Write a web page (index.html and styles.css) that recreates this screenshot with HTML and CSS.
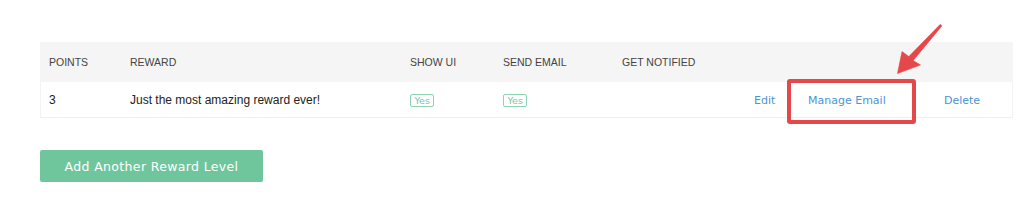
FILE: index.html
```html
<!DOCTYPE html>
<html lang="en">
<head>
    <meta charset="UTF-8">
    <title>Reward Levels</title>
    <link rel="stylesheet" href="styles.css">
</head>
<body>

    <div class="page">
        <table class="rewards">
            <thead>
                <tr>
                    <th class="col-points">POINTS</th>
                    <th class="col-reward">REWARD</th>
                    <th class="col-ui">SHOW UI</th>
                    <th class="col-email">SEND EMAIL</th>
                    <th class="col-notify">GET NOTIFIED</th>
                    <th class="col-edit"></th>
                    <th class="col-manage"></th>
                    <th class="col-delete"></th>
                </tr>
            </thead>
            <tbody>
                <tr>
                    <td>3</td>
                    <td>Just the most amazing reward ever!</td>
                    <td><span class="badge">Yes</span></td>
                    <td><span class="badge">Yes</span></td>
                    <td></td>
                    <td><a href="#" class="action">Edit</a></td>
                    <td><a href="#" class="action">Manage Email</a></td>
                    <td><a href="#" class="action">Delete</a></td>
                </tr>
            </tbody>
        </table>

        <button type="button" class="add-btn">Add Another Reward Level</button>

        <!-- annotation overlay -->
        <div class="highlight"></div>
        <svg class="arrow" width="60" height="60" viewBox="0 0 60 60">
            <path d="M47.3 0.3 L15.8 32.5 L9 27.5 L4.5 49.5 L27.5 41 L20.2 36.5 L48.9 1.9 Z" fill="#e4484b" stroke="#e4484b" stroke-width="0.6" stroke-linejoin="round"/>
        </svg>
    </div>

</body>
</html>
```

FILE: styles.css
```css
body {
    margin: 0;
    background: #fff;
    font-family: "Liberation Sans", Arial, sans-serif;
    color: #333;
}
.page {
    position: relative;
    padding: 42px 0 0 40px;
    height: 169px;
}
.rewards {
    border-collapse: collapse;
    table-layout: fixed;
    width: 973px;
    font-size: 12px;
}
.rewards th {
    background: #f5f5f5;
    height: 40px;
    padding: 0 0 0 9px;
    text-align: left;
    font-weight: normal;
    font-size: 10.5px;
    color: #444;
}
.rewards td {
    height: 35px;
    padding: 0 0 0 9px;
    border-bottom: 1px solid #f0f0f0;
    color: #222;
}
.rewards tbody tr {
    box-shadow: inset 1px 0 0 #f3f3f3, inset -1px 0 0 #f3f3f3;
}
.col-points { width: 72px; }
.col-reward { width: 271px; }
.col-ui { width: 84px; }
.col-email { width: 110px; }
.col-notify { width: 123px; }
.col-edit { width: 45px; }
.col-manage { width: 127px; }
.col-delete { width: 69px; }

.badge {
    display: inline-block;
    font-family: "DejaVu Sans", Verdana, sans-serif;
    font-size: 9.5px;
    line-height: 11px;
    color: #78c6a4;
    border: 1px solid #8fd3b5;
    border-radius: 2px;
    padding: 0 3.5px;
}
.action {
    font-family: "DejaVu Sans", Verdana, sans-serif;
    font-size: 11px;
    color: #4b95d6;
    text-decoration: none;
}
.action:hover {
    text-decoration: underline;
}
.add-btn {
    display: block;
    margin-top: 32px;
    width: 223px;
    height: 32px;
    padding: 0;
    border: none;
    border-radius: 2px;
    background: #6fc69c;
    color: #fff;
    font-family: "DejaVu Sans", Verdana, sans-serif;
    font-size: 12.5px;
    letter-spacing: 0.35px;
    cursor: pointer;
}
.highlight {
    position: absolute;
    left: 787px;
    top: 79px;
    width: 121px;
    height: 37px;
    border: 4px solid #e4484b;
    border-radius: 3px;
}
.arrow {
    position: absolute;
    left: 893px;
    top: 24px;
}
```
